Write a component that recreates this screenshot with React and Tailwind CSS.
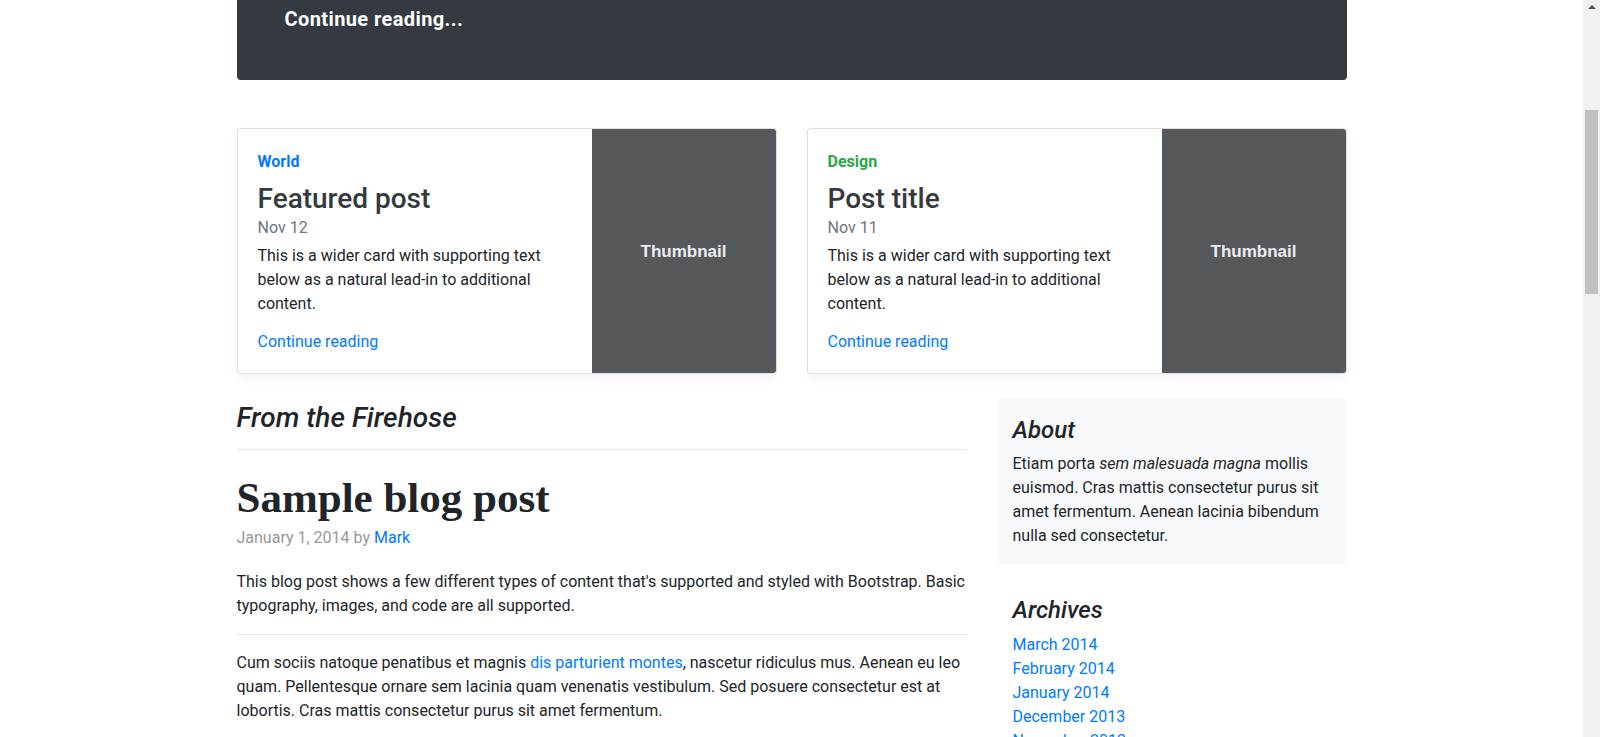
import React from "react";

const cards = [
  { tag: "World", tagColor: "text-[#007bff]", title: "Featured post", date: "Nov 12" },
  { tag: "Design", tagColor: "text-[#28a745]", title: "Post title", date: "Nov 11" },
];

const archives = [
  "March 2014",
  "February 2014",
  "January 2014",
  "December 2013",
  "November 2013",
  "October 2013",
];

function FeaturedCard({ card }) {
  return (
    <div className="flex h-[246px] flex-1 overflow-hidden rounded border border-[rgba(0,0,0,0.125)] bg-white shadow-[0_4px_12px_rgba(0,0,0,0.05)]">
      <div className="flex flex-1 flex-col items-start px-5 pt-[21px] pb-[19px]">
        <strong className={`mb-2 inline-block font-bold ${card.tagColor}`}>{card.tag}</strong>
        <h3 className="pt-[1px] text-[28px] font-medium leading-[32.6px] text-[#343a40]">{card.title}</h3>
        <div className="mb-1 text-[#6c757d]">{card.date}</div>
        <p className="mb-auto">
          This is a wider card with supporting text below as a natural lead-in to additional content.
        </p>
        <a href="#" className="text-[#007bff]">
          Continue reading
        </a>
      </div>
      <div className="flex w-[184px] shrink-0 items-center justify-center bg-[#55595c]">
        <span className="pt-[1px] font-['Liberation_Sans',Arial,sans-serif] text-[17px] font-bold text-[#eceeef]">
          Thumbnail
        </span>
      </div>
    </div>
  );
}

function Scrollbar() {
  return (
    <div className="flex w-[17px] shrink-0 flex-col items-center bg-[#f1f1f1]">
      <div className="flex h-[17px] w-full items-start justify-center pt-[5px]">
        <svg width="8" height="4" viewBox="0 0 8 4">
          <polygon points="0,4 4,0 8,4" fill="#505050" />
        </svg>
      </div>
      <div className="mt-[93px] h-[184px] w-[13px] bg-[#c1c1c1]" />
    </div>
  );
}

export default function App() {
  return (
    <div className="flex h-[737px] overflow-hidden bg-white font-['Roboto','Noto_Sans',sans-serif] text-[16px] leading-6 text-[#212529]">
      <div className="min-w-0 flex-1">
        <div className="mx-auto w-[1140px] px-[15px]">
          {/* jumbotron, scrolled so only its bottom shows */}
          <div className="h-[80px] rounded-b bg-[#343a40] px-12 pt-[4px]">
            <p className="text-[20px] font-bold leading-[30px] tracking-[0.4px] text-white">Continue reading...</p>
          </div>

          <div className="mt-12 flex gap-[30px]">
            {cards.map((card) => (
              <FeaturedCard key={card.title} card={card} />
            ))}
          </div>

          <div className="mt-[25px] flex gap-[30px]">
            <main className="w-[730px] shrink-0">
              <h3 className="mb-6 border-b border-[#e5e5e5] pt-[2px] pb-[14px] text-[28px] font-medium italic leading-[33.6px]">
                From the Firehose
              </h3>

              <h2 className="mb-1 font-['Liberation_Serif',serif] text-[43px] font-bold leading-[48px] text-[#212529]">
                Sample blog post
              </h2>
              <p className="mb-5 text-[#999]">
                January 1, 2014 by{" "}
                <a href="#" className="text-[#007bff]">
                  Mark
                </a>
              </p>
              <p>
                This blog post shows a few different types of content that's supported and styled with
                Bootstrap. Basic typography, images, and code are all supported.
              </p>
              <hr className="my-4 border-t border-[rgba(0,0,0,0.1)]" />
              <p>
                Cum sociis natoque penatibus et magnis{" "}
                <a href="#" className="text-[#007bff]">
                  dis parturient montes
                </a>
                , nascetur ridiculus mus. Aenean eu leo quam. Pellentesque ornare sem lacinia quam venenatis
                vestibulum. Sed posuere consectetur est at lobortis. Cras mattis consectetur purus sit amet
                fermentum.
              </p>
            </main>

            <aside className="w-[350px] shrink-0">
              <div className="mb-4 rounded bg-[#f8f9fa] p-4">
                <h4 className="mb-2 pt-[2px] text-[24px] font-medium italic leading-[26.8px]">About</h4>
                <p>
                  Etiam porta <em>sem malesuada magna</em> mollis euismod. Cras mattis consectetur purus sit
                  amet fermentum. Aenean lacinia bibendum nulla sed consectetur.
                </p>
              </div>
              <div className="p-4">
                <h4 className="mb-2 pt-[1px] text-[24px] font-medium italic leading-[27.8px]">Archives</h4>
                <ol>
                  {archives.map((a) => (
                    <li key={a}>
                      <a href="#" className="text-[#007bff]">
                        {a}
                      </a>
                    </li>
                  ))}
                </ol>
              </div>
            </aside>
          </div>
        </div>
      </div>
      <Scrollbar />
    </div>
  );
}
